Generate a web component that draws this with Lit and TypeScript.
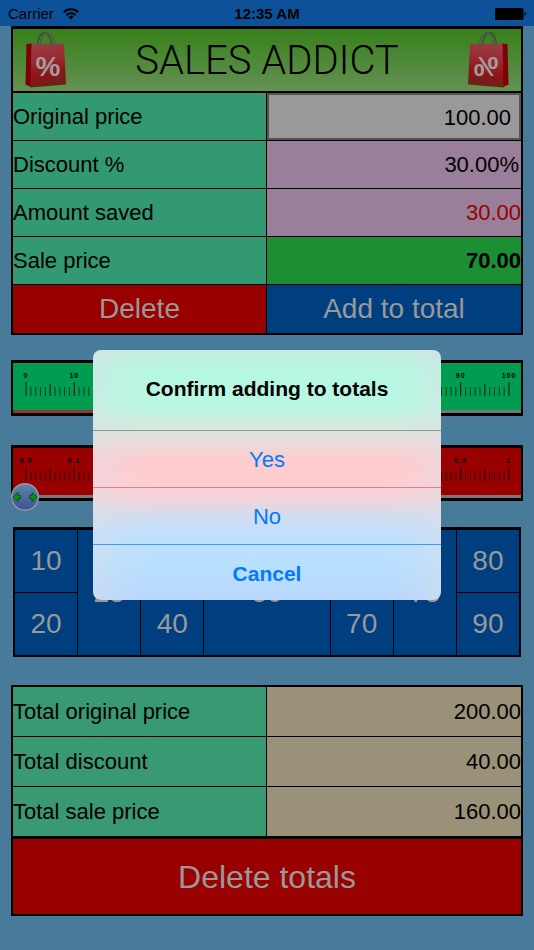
import { LitElement, html, css, svg } from "lit";
import { customElement, property, state } from "lit/decorators.js";

const base = css`
  * { box-sizing: border-box; }
  button, input {
    margin: 0;
    padding: 0;
    border: 0;
    border-radius: 0;
    font-family: inherit;
  }
`;

@customElement("sale-bag")
export class SaleBag extends LitElement {
  static styles = css`
    :host { display: block; width: 42px; height: 58px; }
    :host([mirrored]) { transform: scaleX(-1); }
    svg { display: block; }
    text {
      font-family: "Liberation Sans", Arial, sans-serif;
      font-size: 28px;
      font-weight: 700;
      text-anchor: middle;
      fill: #a39c9c;
    }
  `;
  render() {
    return html`<svg width="42" height="58" viewBox="0 0 42 58" aria-hidden="true">
      <defs>
        <linearGradient id="front" x1="0" y1="0" x2="0.15" y2="1">
          <stop offset="0" stop-color="#983f46" />
          <stop offset="0.4" stop-color="#9a2b32" />
          <stop offset="0.75" stop-color="#8f1419" />
          <stop offset="1" stop-color="#6b2218" />
        </linearGradient>
      </defs>
      <path d="M12.500 16 C13 -3 25 -3 27 15" fill="none" stroke="#3c4a3a" stroke-width="1.200" />
      <path d="M1.500 13 L7 12.500 L6 56 L0.500 53.500 Z" fill="#7d0007" />
      <path d="M6.500 12.500 L39 13 L41 53.500 L5.500 56.500 Z" fill="url(#front)" />
      <path d="M15.500 16 C15 -3 28 -3 30 16" fill="none" stroke="#52584f" stroke-width="1.400" />
      <text x="23" y="45">%</text>
    </svg>`;
  }
}

@customElement("ruler-slider")
export class RulerSlider extends LitElement {
  @property() label = "";
  @property() tone = "green";
  @property({ type: Number }) max = 100;
  @property({ type: Number }) value = 0;

  static styles = [base, css`
    :host { display: block; }
    .frame {
      position: relative;
      border: 3px solid #000;
      border-width: 3px 2px;
      font-family: "Liberation Sans", Arial, sans-serif;
    }
    .green { background: #009c50; }
    .red { background: #990000; }
    .scale { padding: 0 12px 0 13px; }
    svg { display: block; overflow: visible; }
    .ruler { width: 100%; height: 47px; }
    text { font-size: 7px; font-weight: 700; letter-spacing: 1px; text-anchor: middle; }
    .range {
      display: block;
      width: 100%;
      height: 3px;
      appearance: none;
      background: linear-gradient(90deg, #963434 var(--done), #777 var(--done));
    }
    .range::-webkit-slider-thumb { appearance: none; width: 28px; height: 28px; opacity: 0; }
    .lane { position: absolute; left: -2px; right: 26px; bottom: -13px; height: 28px; pointer-events: none; }
    .knob { position: absolute; top: 0; }
  `];

  private move(e: Event) {
    this.value = Number((e.target as HTMLInputElement).value);
  }

  render() {
    const share = (this.value / this.max) * 100;
    const ticks = Array.from({ length: 101 }, (_, i) => i);
    const name = (i: number) =>
      this.max === 1 ? (i === 100 ? "1" : (i / 100).toFixed(1)) : String(i);
    return html`<div class="frame ${this.tone}">
      <div class="scale">
        <svg class="ruler" aria-hidden="true">
          ${ticks.map((i) => svg`<line x1="${i}%" x2="${i}%" y1="${i % 10 === 0 ? 19 : i % 5 === 0 ? 21 : 24}" y2="33"
            stroke="#000" stroke-opacity="${i % 5 === 0 ? 0.85 : 0.6}" stroke-width="1" />
            ${i % 10 === 0 ? svg`<text x="${i}%" y="15">${name(i)}</text>` : ""}`)}
        </svg>
      </div>
      <input class="range" type="range" aria-label=${this.label} min="0" max=${this.max}
        step=${this.max / 100} .value=${String(this.value)} @input=${this.move} style="--done:${share}%" />
      <div class="lane">
        <svg class="knob" width="28" height="28" viewBox="0 0 28 28" style="left:${share}%">
          <defs>
            <linearGradient id="ball" x1="0" y1="0" x2="0" y2="1">
              <stop offset="0" stop-color="#5b87ad" />
              <stop offset="1" stop-color="#3e4f93" />
            </linearGradient>
          </defs>
          <circle cx="14" cy="14" r="13.300" fill="url(#ball)" stroke="#999" stroke-width="1.400" />
          <path d="M2 14 L7 9.500 V12.500 H9.500 V15.500 H7 V18.500 Z M26 14 L21 9.500 V12.500 H18.500 V15.500 H21 V18.500 Z"
            fill="#009900" stroke="#12401a" stroke-width="0.800" />
        </svg>
      </div>
    </div>`;
  }
}

@customElement("app-root")
export class AppRoot extends LitElement {
  @state() private original = "100.00";

  static styles = [base, css`
    :host {
      display: block;
      position: relative;
      min-height: 100vh;
      background: #487a9a;
      color: #000;
      font-family: "Liberation Sans", Arial, sans-serif;
      font-size: 22px;
      line-height: 26px;
    }
    .status {
      display: grid;
      grid-template-columns: 1fr auto 1fr;
      align-items: center;
      height: 26px;
      padding: 2px 8px 0;
      background: #0d5299;
      font-size: 15px;
      line-height: 24px;
    }
    .carrier { display: flex; align-items: center; gap: 9px; }
    .clock { font-weight: 700; }
    .battery { justify-self: end; }
    .page { display: flex; flex-direction: column; padding: 0 11px 34px; }
    .card { border: 2px solid #000; background: #000; }
    .sale { border-top-width: 3px; }
    .head {
      display: flex;
      align-items: center;
      justify-content: space-between;
      height: 62px;
      padding: 0 12px;
      background: linear-gradient(#37801a, #649154);
    }
    h1 { margin: 0; padding-top: 2px; font-family: Roboto, "Liberation Sans", sans-serif; font-weight: 300; font-size: 40px; line-height: 46px; }
    table { width: 100%; border-collapse: separate; border-spacing: 0; table-layout: fixed; }
    th, td { padding: 0; height: 48px; }
    th { border-right: 1px solid #000; background: #339973; font-weight: 400; text-align: left; }
    td { text-align: right; }
    tr > * { border-bottom: 1px solid #000; }
    .prices { border-top: 2px solid #000; }
    .mauve { background: #997f99; }
    .saved { color: #990000; }
    .final { background: #1c8e33; font-weight: 700; }
    .price {
      display: block;
      width: 100%;
      height: 47px;
      padding: 2px 8px 0 0;
      border: 2px solid #555;
      background: #999;
      color: #000;
      font-size: 22px;
      text-align: right;
    }
    .percent { padding-right: 2px; }
    .actions { display: grid; grid-template-columns: 1fr 1fr; height: 48px; }
    .actions .danger { border-right: 1px solid #000; }
    .act { color: #999; font-size: 28px; line-height: 32px; }
    .danger { background: #990000; }
    .navy { background: #003f7f; }
    .slider { margin-top: 25px; }
    .slider + .slider { margin-top: 29px; }
    .keys {
      display: grid;
      grid-template-columns: repeat(8, 1fr);
      grid-template-rows: 62px 62px;
      grid-auto-flow: column;
      gap: 1px;
      margin: 26px 2px 0;
      border-top-width: 3px;
    }
    .tall { grid-row: span 2; }
    .wide { grid-column: span 2; }
    .totals { margin-top: 28px; }
    .sums { border-bottom: 2px solid #000; }
    .sums th, .sums td { height: 50px; }
    .sums th { background: #389973; }
    .sums td { background: #999279; }
    .wipe { display: block; width: 100%; height: 75px; font-size: 32px; }
    .layer {
      position: absolute;
      inset: 0;
      display: flex;
      align-items: center;
      justify-content: center;
    }
    .alert {
      width: 348px;
      overflow: hidden;
      border-radius: 8px;
      background:
        linear-gradient(90deg, rgba(222, 222, 230, 0.45), rgba(222, 222, 230, 0.15) 8%, rgba(222, 222, 230, 0) 18%, rgba(222, 222, 230, 0) 84%, rgba(222, 222, 230, 0.15) 93%, rgba(222, 222, 230, 0.45)),
        linear-gradient(#c4ebe0, #b6f7e2 22px, #b8f8e2 56px, #d9e8e0 78px, #eadbd9 92px, #ffcccf 112px, #ffcdd0 132px, #f3d3da 148px, #d5dcec 164px, #bfe1ff 184px, #b9e0ff 215px, #b9d7fd 250px);
    }
    h2 { margin: 0; padding: 26px 0 28px; font-size: 21px; line-height: 26px; text-align: center; }
    .choice {
      display: block;
      width: 100%;
      height: 57px;
      padding-top: 2px;
      border-top: 1px solid #7ba390;
      background: none;
      color: #007aff;
      font-size: 22px;
      line-height: 26px;
    }
    .second { border-color: #dd818b; }
    .third { height: 56px; border-color: #3c98f8; font-size: 21px; font-weight: 700; }
  `];

  private edit(e: Event) {
    this.original = (e.target as HTMLInputElement).value;
  }

  render() {
    const keys = [10, 20, 25, 30, 40, 50, 60, 70, 75, 80, 90];
    const shape = (k: number) => (k === 50 ? "tall wide" : k % 10 ? "tall" : "");
    const sums = [
      ["Total original price", "200.00"],
      ["Total discount", "40.00"],
      ["Total sale price", "160.00"],
    ];
    return html`
      <div class="status">
        <span class="carrier">Carrier
          <svg width="16" height="12" viewBox="0 0 16 12" aria-label="Wi-Fi">
            <g fill="none" stroke="#000" stroke-width="2">
              <path d="M0.700 4.200 A10.500 10.500 0 0 1 15.300 4.200" />
              <path d="M3.400 7.200 A6.500 6.500 0 0 1 12.600 7.200" />
            </g>
            <path d="M5.400 8.800 A4 4 0 0 1 10.600 8.800 L8 11.600 Z" />
          </svg>
        </span>
        <span class="clock">12:35 AM</span>
        <svg class="battery" width="31" height="12" viewBox="0 0 31 12" aria-label="Battery">
          <rect width="28.500" height="12" rx="1.500" />
          <path d="M29.500 4 Q31 4.500 31 6 Q31 7.500 29.500 8 Z" />
        </svg>
      </div>
      <main class="page">
        <section class="card sale">
          <header class="head">
            <sale-bag></sale-bag>
            <h1>SALES ADDICT</h1>
            <sale-bag mirrored></sale-bag>
          </header>
          <table class="prices">
            <tr>
              <th scope="row"><label for="price">Original price</label></th>
              <td><input class="price" id="price" type="text" .value=${this.original} @input=${this.edit} /></td>
            </tr>
            <tr><th scope="row">Discount %</th><td class="mauve percent">30.00%</td></tr>
            <tr><th scope="row">Amount saved</th><td class="mauve saved">30.00</td></tr>
            <tr><th scope="row">Sale price</th><td class="final">70.00</td></tr>
          </table>
          <div class="actions">
            <button class="act danger">Delete</button>
            <button class="act navy">Add to total</button>
          </div>
        </section>
        <ruler-slider class="slider" label="Discount, whole percent" tone="green" max="100" value="30"></ruler-slider>
        <ruler-slider class="slider" label="Discount, fraction of a percent" tone="red" max="1" value="0"></ruler-slider>
        <section class="card keys">
          ${keys.map((k) => html`<button class="act navy ${shape(k)}">${k}</button>`)}
        </section>
        <section class="card totals">
          <table class="sums">
            ${sums.map(([name, sum]) => html`<tr><th scope="row">${name}</th><td>${sum}</td></tr>`)}
          </table>
          <button class="act danger wipe">Delete totals</button>
        </section>
      </main>
      <div class="layer">
        <div class="alert" role="alertdialog" aria-labelledby="question">
          <h2 id="question">Confirm adding to totals</h2>
          <button class="choice">Yes</button>
          <button class="choice second">No</button>
          <button class="choice third">Cancel</button>
        </div>
      </div>
    `;
  }
}
